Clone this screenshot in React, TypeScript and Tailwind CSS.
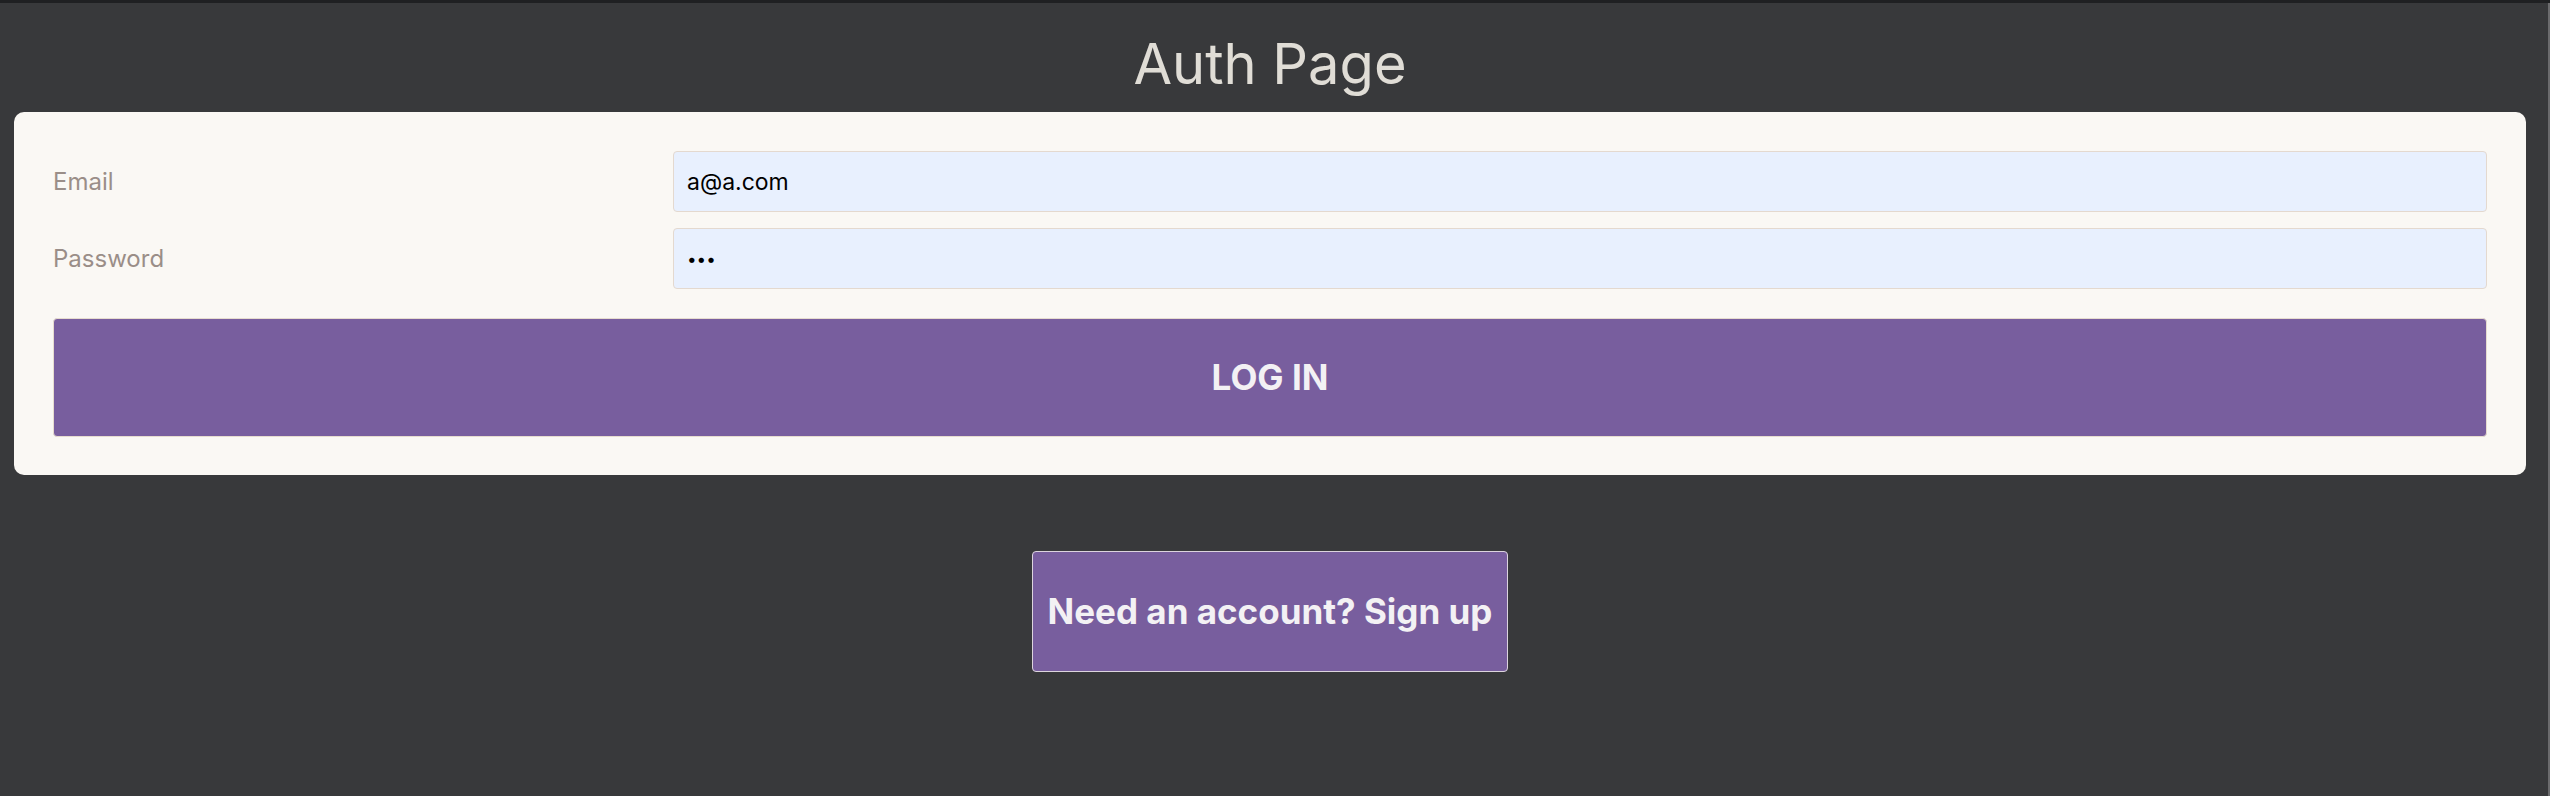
export default function App() {
  return (
    <div className="min-h-screen bg-[#38393b] border-t-[3px] border-[#1f2022] flex font-['Inter',sans-serif]">
      <main className="flex-1 pl-[14px] pr-[22px]">
        <h1 className="mt-[26px] mb-[13px] text-center text-[56px] leading-[70px] text-[#e0ddd6]">
          Auth Page
        </h1>

        <form className="rounded-[10px] bg-[#faf8f4] px-[39px] pt-[39px] pb-[38px]">
          <div className="grid grid-cols-[620px_1fr] items-center gap-y-4">
            <label className="text-[24px] text-[#9a8e88]">Email</label>
            <input
              type="email"
              defaultValue="a@a.com"
              readOnly
              className="h-[61px] w-full rounded-[4px] border border-[#e4d9cf] bg-[#e8f0fe] px-[13px] text-[23px] text-black outline-none"
            />
            <label className="text-[24px] text-[#9a8e88]">Password</label>
            <input
              type="password"
              defaultValue="abc"
              readOnly
              className="h-[61px] w-full rounded-[4px] border border-[#e4d9cf] bg-[#e8f0fe] px-[13px] text-[17px] text-black outline-none"
            />
          </div>

          <button
            type="button"
            className="mt-[29px] h-[119px] w-full rounded-[4px] border border-[#e6dccf] bg-[#785e9e] text-[35px] font-bold text-[#f3f1f4]"
          >
            LOG IN
          </button>
        </form>

        <div className="mt-[76px] flex justify-center">
          <button
            type="button"
            className="h-[121px] rounded-[4px] border border-[#dcd4de] bg-[#785e9e] px-[15px] text-[35px] font-bold text-[#f3f1f4]"
          >
            Need an account? Sign up
          </button>
        </div>
      </main>
      <div className="w-[2px] bg-[#6b6b6d]" />
    </div>
  );
}
